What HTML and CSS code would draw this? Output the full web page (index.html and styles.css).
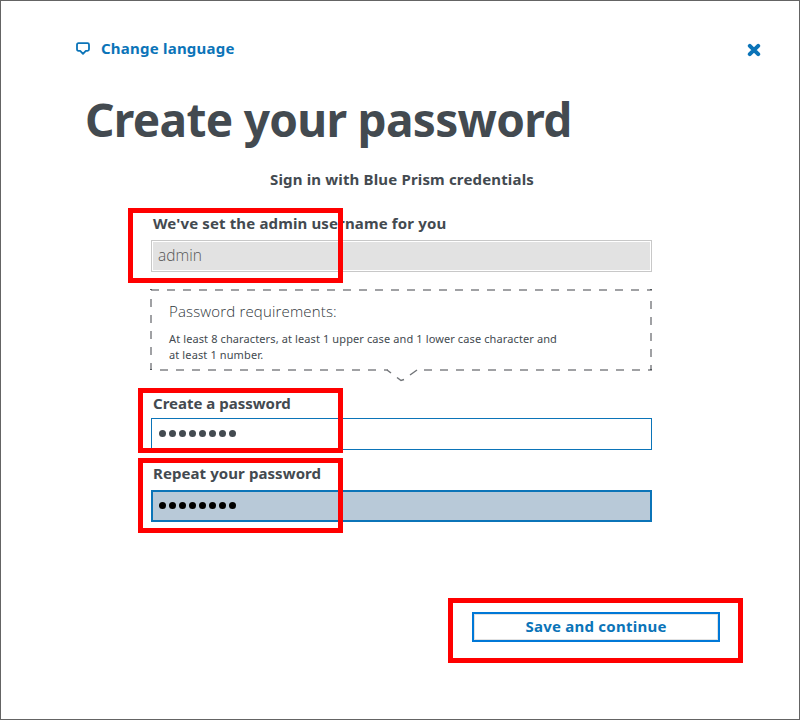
FILE: index.html
```html
<!DOCTYPE html>
<html lang="en">
<head>
<meta charset="utf-8">
<title>Create your password</title>
<link rel="stylesheet" href="styles.css">
</head>
<body>
<main class="dialog">
  <header class="topbar">
    <a class="language">
      <svg width="16" height="16" viewBox="0 0 16 16" fill="none" stroke="#0b74b8" stroke-width="1.8" stroke-linejoin="round"><path d="M3.5 2.2h9q1.500 0 1.500 1.500v4.600q0 1.500-1.500 1.500h-1.700L8 12.800 5.200 9.800H3.500Q2 9.800 2 8.300V3.700Q2 2.200 3.500 2.200Z"/></svg>
      <span class="language-text">Change language</span>
    </a>
    <svg class="close" width="14" height="14" viewBox="0 0 14 14" stroke="#0b74b8" stroke-width="4" stroke-linecap="round"><path d="M2.800 2.800 11.200 11.200M11.200 2.800 2.800 11.200"/></svg>
  </header>
  <h1 class="title">Create your password</h1>
  <p class="subtitle">Sign in with Blue Prism credentials</p>
  <form class="form">
    <label class="label label-admin">We've set the admin username for you</label>
    <div class="field field-disabled"><span class="admin">admin</span></div>
    <section class="hint">
      <svg class="hint-frame" width="504" height="96" viewBox="0 0 504 96" fill="none" stroke="#a0a1a4" stroke-width="2">
        <path stroke-dasharray="8 8" d="M1 2H502"/>
        <path stroke-dasharray="8 8" d="M1 11V82"/>
        <path stroke-dasharray="8 8" d="M501 13V82"/>
        <path stroke-dasharray="8 8" d="M10 82H238"/>
        <path stroke-dasharray="8 8" d="M274 82H502"/>
        <path stroke="#727579" stroke-width="1.500" d="M237 82l4 3M247 89.500l4 3 3-1M260 87l7-5"/>
        <path stroke="#50555a" stroke-width="1" d="M0 1.500H2M500 1.500H502M0 81.500H2M500 81.500H502"/>
      </svg>
      <h2 class="hint-title">Password requirements:</h2>
      <p class="hint-text"><span class="hint-one">At least 8 characters, at least 1 upper case and 1 lower case character and</span><br><span class="hint-two">at least 1 number.</span></p>
    </section>
    <label class="label label-create">Create a password</label>
    <div class="field"><span class="dots"><i></i><i></i><i></i><i></i><i></i><i></i><i></i><i></i></span></div>
    <label class="label label-repeat">Repeat your password</label>
    <div class="field field-focus"><span class="dots"><i></i><i></i><i></i><i></i><i></i><i></i><i></i><i></i></span></div>
  </form>
  <footer class="footer"><button class="save" type="button">Save and continue</button></footer>
  <div class="mark mark-username"></div>
  <div class="mark mark-create"></div>
  <div class="mark mark-repeat"></div>
  <div class="mark mark-save"></div>
</main>
</body>
</html>
```
FILE: styles.css
```css
* { box-sizing: border-box; }
body { margin: 0; background: #fff; font-family: "Noto Sans", "Open Sans", sans-serif; color: #434a50; }
.dialog { position: relative; width: 800px; height: 720px; border: 1px solid #646464; background: #fff; overflow: hidden; }
.topbar { display: flex; justify-content: space-between; align-items: center; height: 24px; margin: 36px 38px 0 74px; color: #0b74b8; }
.language { display: flex; align-items: center; gap: 10px; font-size: 15px; font-weight: 700; line-height: 24px; }
.language-text { margin-top: -2px; letter-spacing: .22px; white-space: nowrap; }
.close { margin-top: 1px; }
.title { margin: 24px 0 0 84px; font-size: 46px; line-height: 68px; font-weight: 700; letter-spacing: -.7px; white-space: nowrap; }
.subtitle { margin: 14px 0 0; padding-left: 269px; font-size: 15px; line-height: 24px; font-weight: 700; letter-spacing: .16px; white-space: nowrap; }
.form { width: 501px; margin: 20px 0 0 150px; }
.label { display: block; height: 24px; padding-left: 2px; font-size: 15px; line-height: 24px; font-weight: 700; white-space: nowrap; }
.label-admin { letter-spacing: .14px; }
.field { display: flex; align-items: center; width: 501px; height: 32px; padding: 0 0 2px 7px; border: 1px solid #0b74b8; }
.field-disabled { margin-top: 5px; padding-left: 6px; border-color: #c8c8c8; background: #e2e2e2; box-shadow: inset 0 0 0 1px #fff; }
.admin { font-family: "Open Sans", sans-serif; font-size: 15.5px; line-height: 28px; font-weight: 300; color: #555; }
.hint { position: relative; height: 96px; margin: 16px 0 0 -1px; padding: 11px 0 0 19px; }
.hint-frame { position: absolute; left: 0; top: 0; }
.hint-title { margin: 0; font-family: "Open Sans", sans-serif; font-size: 15px; line-height: 24px; font-weight: 300; letter-spacing: .16px; color: #30363b; white-space: nowrap; }
.hint-text { margin: 8px 0 0; font-size: 11px; line-height: 16px; white-space: nowrap; }
.hint-one { letter-spacing: .11px; }
.hint-two { letter-spacing: .12px; }
.label-create { margin-top: 7px; }
.label-create + .field { margin-top: 3px; }
.label-repeat { margin-top: 11px; letter-spacing: .08px; }
.field-focus { margin-top: 5px; padding-left: 6px; border-width: 2px; background: #b8c9d8; color: #000; }
.dots { display: flex; gap: 3px; }
.dots i { width: 7px; height: 7px; border-radius: 50%; background: currentColor; }
.footer { display: flex; justify-content: flex-end; margin: 90px 79px 0 0; }
.save { width: 248px; height: 30px; padding: 0 0 2px; border: 2px solid #0078d7; background: #fff; box-shadow: inset 0 0 0 1px #e2e2e2; color: #0b74b8; font: 700 15px/24px "Noto Sans", sans-serif; letter-spacing: .24px; }
.mark { position: absolute; border: 5px solid #f00; pointer-events: none; }
.mark-username { left: 127px; top: 207px; width: 215px; height: 75px; }
.mark-create { left: 137px; top: 387px; width: 205px; height: 65px; }
.mark-repeat { left: 137px; top: 457px; width: 205px; height: 75px; }
.mark-save { left: 447px; top: 597px; width: 295px; height: 65px; }
```
